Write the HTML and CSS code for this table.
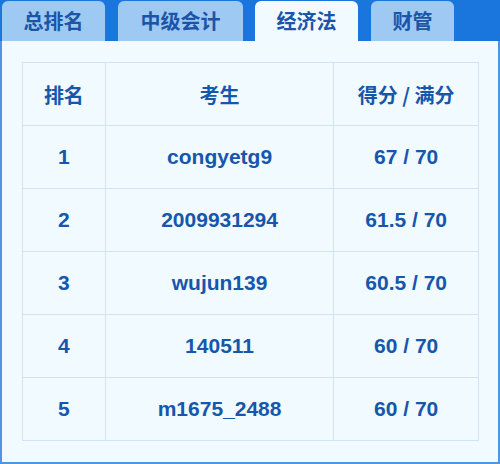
FILE: index.html
```html
<!DOCTYPE html>
<html>
<head>
<meta charset="utf-8">
<link rel="stylesheet" href="styles.css">
</head>
<body>
<div class="app">
  <div class="tabs">
    <div class="tab t1">总排名</div>
    <div class="tab t2">中级会计</div>
    <div class="tab t3 active">经济法</div>
    <div class="tab t4">财管</div>
  </div>
  <div class="panel">
    <table class="rank">
      <thead>
        <tr><th class="c1">排名</th><th class="c2">考生</th><th class="c3">得分 / 满分</th></tr>
      </thead>
      <tbody>
        <tr><td>1</td><td>congyetg9</td><td>67 / 70</td></tr>
        <tr><td>2</td><td>2009931294</td><td>61.5 / 70</td></tr>
        <tr><td>3</td><td>wujun139</td><td>60.5 / 70</td></tr>
        <tr><td>4</td><td>140511</td><td>60 / 70</td></tr>
        <tr><td>5</td><td>m1675_2488</td><td>60 / 70</td></tr>
      </tbody>
    </table>
  </div>
</div>
</body>
</html>
```

FILE: styles.css
```css
html, body { margin: 0; padding: 0; }
body { width: 500px; height: 464px; overflow: hidden; }
.app {
  width: 500px; height: 464px;
  background: #1a76dc;
  display: flex; flex-direction: column;
  font-family: "Liberation Sans", "Noto Sans CJK SC", sans-serif;
  color: #1656ac;
}
.tabs {
  height: 41px; flex: none;
  display: flex; align-items: flex-end;
  padding-left: 2px;
}
.tab {
  height: 40px; box-sizing: border-box;
  background: #9ec9f2;
  border-radius: 6px 6px 0 0;
  display: flex; align-items: center; justify-content: center;
  font-family: "Noto Sans CJK SC", sans-serif;
  font-weight: 700; font-size: 20px;
  color: #1a55a8;
  padding-bottom: 1px;
}
.t1 { width: 103px; }
.t2 { width: 125px; margin-left: 13px; }
.t3 { width: 103px; margin-left: 12px; }
.t4 { width: 83px; margin-left: 13px; }
.tab.active { background: #f0faff; }
.panel {
  flex: 1;
  background: #f0faff;
  border: 2px solid #4f95e2; border-top: none;
  padding: 21px 19px 21px 20px;
}
.rank {
  border-collapse: collapse;
  table-layout: fixed;
}
.rank th, .rank td {
  border: 1px solid #cfe4f6;
  height: 62px; padding: 0;
  text-align: center;
  font-weight: 700; font-size: 21px;
  color: #1656ac;
}
.rank th { font-family: "Noto Sans CJK SC", sans-serif; font-size: 20px; }
.c1 { width: 82px; }
.c2 { width: 228px; }
.c3 { width: 144px; }
```
